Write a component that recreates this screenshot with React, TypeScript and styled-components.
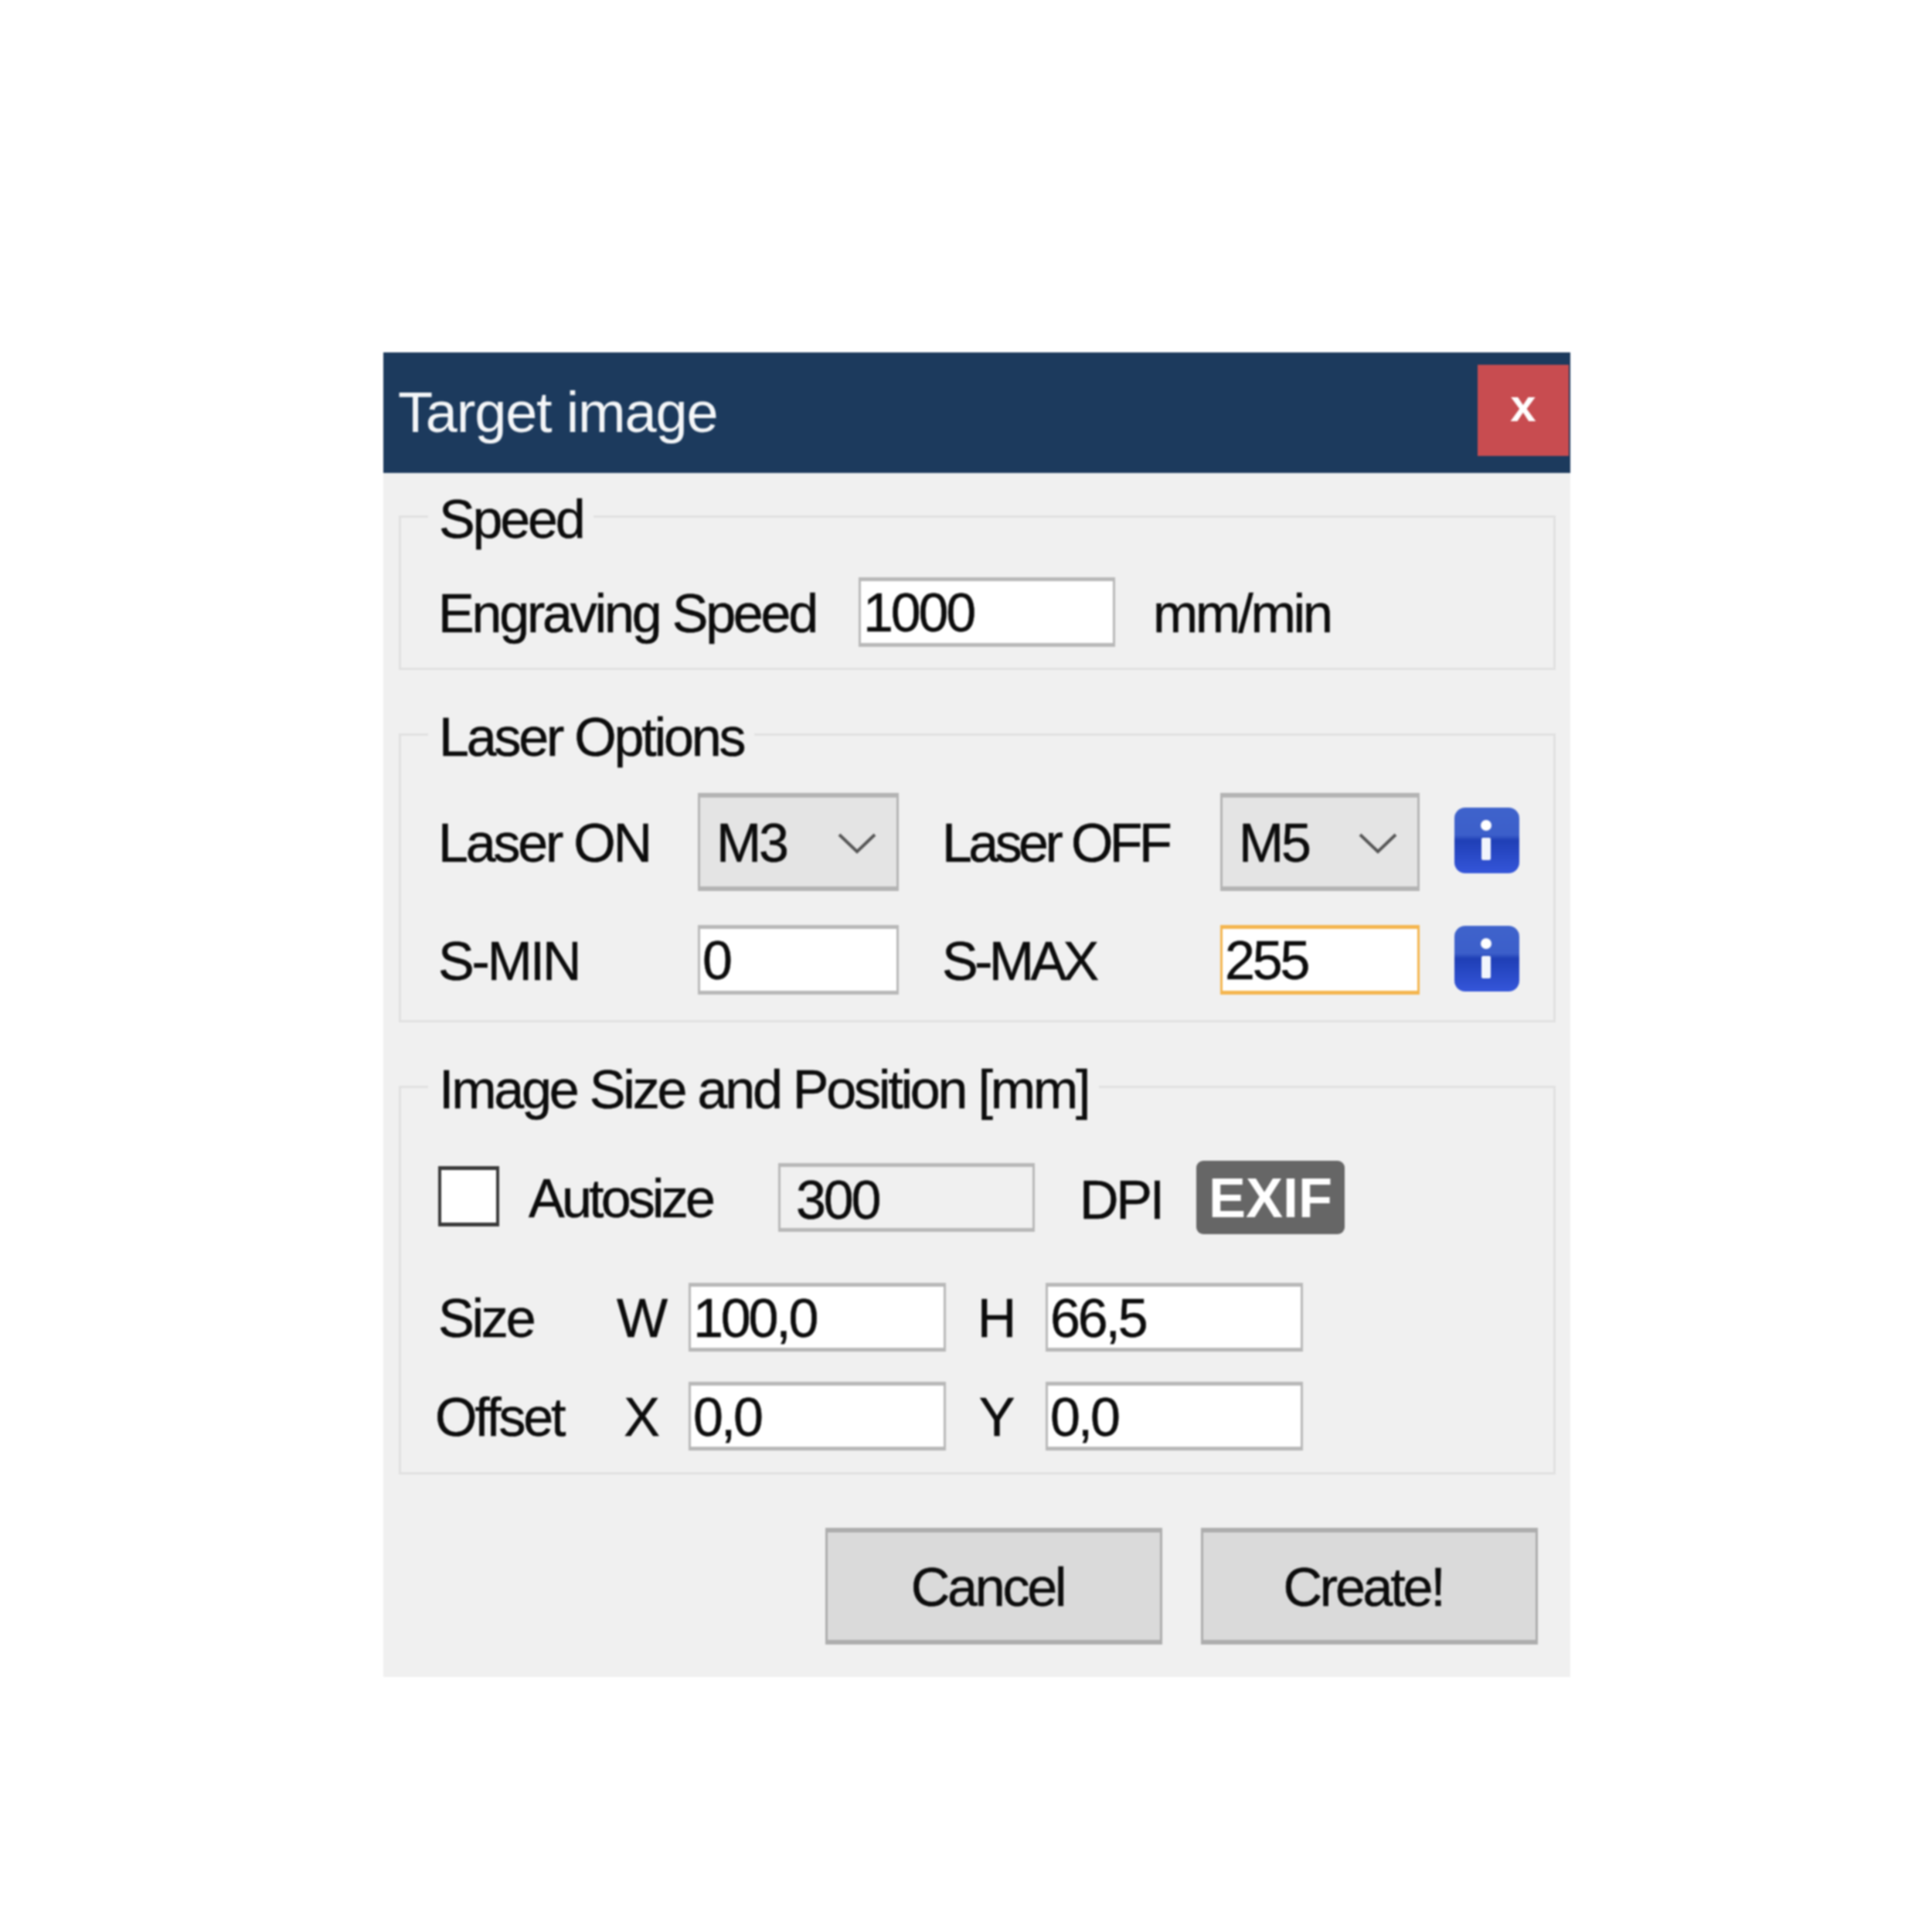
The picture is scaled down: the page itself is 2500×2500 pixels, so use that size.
import React from "react";
import styled, { createGlobalStyle } from "styled-components";

const Global = createGlobalStyle`
  * { box-sizing: border-box; }
  html, body { margin: 0; background: #fff; }
  body { font-family: "Liberation Sans", Arial, sans-serif; }
`;

const Page = styled.div`
  padding: 456px 0 0 496px;
  min-height: 2500px;
  background: #fff;
`;

const Dialog = styled.div`
  width: 1536px;
  background: #f0f0f0;
  color: #0c0c0c;
  font-size: 70px;
  line-height: 70px;
  letter-spacing: -3.2px;
  -webkit-text-stroke: 0.5px #0c0c0c;
  filter: blur(1.3px);
`;

const TitleBar = styled.header`
  height: 156px;
  background: #1c3a5d;
  display: flex;
  align-items: center;
  justify-content: space-between;
  padding: 0 2px 0 19px;
  -webkit-text-stroke: 0;
`;

const Title = styled.h1`
  margin: 0;
  font-size: 74px;
  font-weight: 400;
  letter-spacing: -1.2px;
  line-height: 74px;
  color: #f4f6f8;
`;

const Close = styled.button`
  width: 118px;
  height: 118px;
  margin-bottom: 6px;
  padding: 0 0 12px;
  border: 0;
  background: #c84c50;
  color: #fff;
  font: 700 60px/60px "Liberation Sans", Arial, sans-serif;
  display: flex;
  align-items: center;
  justify-content: center;
`;

const Body = styled.div`
  padding: 55px 19px 42px 20px;
  display: flex;
  flex-direction: column;
  gap: 82px;
`;

const Group = styled.section<{ $pt: number; $pb: number }>`
  position: relative;
  border: 3px solid #e1e1e1;
  padding: ${(p) => p.$pt}px 0 ${(p) => p.$pb}px 48px;
`;

const Legend = styled.h2`
  position: absolute;
  top: -33px;
  left: 35px;
  margin: 0;
  padding: 0 14px;
  background: #f0f0f0;
  font: inherit;
  letter-spacing: inherit;
`;

const Row = styled.div`
  display: flex;
  align-items: center;
`;

const Label = styled.span<{ $w?: number; $ml?: number; $ls?: number }>`
  display: block;
  white-space: nowrap;
  padding-top: 3px;
  width: ${(p) => (p.$w ? `${p.$w}px` : "auto")};
  margin-left: ${(p) => p.$ml ?? 0}px;
  ${(p) => (p.$ls ? `letter-spacing: ${p.$ls}px;` : "")}
`;

const Field = styled.input<{ $w: number; $h?: number; $focus?: boolean; $off?: boolean; $pl?: number }>`
  width: ${(p) => p.$w}px;
  height: ${(p) => p.$h ?? 90}px;
  flex: none;
  border-style: solid;
  border-width: 5px 3px;
  border-color: ${(p) => (p.$focus ? "#f4b54e" : "#b8b8b8")};
  border-radius: 0;
  outline: 0;
  padding: ${(p) => (p.$off ? 6 : 2)}px 0 0 ${(p) => p.$pl ?? 3}px;
  background: ${(p) => (p.$off ? "#f0f0f0" : "#fff")};
  color: #0c0c0c;
  font: inherit;
  letter-spacing: inherit;
`;

const LaserGrid = styled.div`
  display: grid;
  grid-template-columns: 336px 260px 416px 258px 129px;
  grid-template-rows: 127px 90px;
  row-gap: 44px;
  align-items: center;
`;

const EndLabel = styled(Label)`
  justify-self: end;
  width: 360px;
  letter-spacing: -4.6px;
`;

const Select = styled.div<{ $w: number }>`
  width: ${(p) => p.$w}px;
  height: 127px;
  border-style: solid;
  border-width: 6px 3px;
  border-color: #b4b4b4;
  background: #e4e4e4;
  padding: 3px 26px 0 21px;
  display: flex;
  align-items: center;
  justify-content: space-between;
`;

const InfoSlot = styled.button`
  justify-self: end;
  margin: -4px 0 0;
  padding: 0;
  border: 0;
  background: none;
  width: 84px;
  height: 85px;
  display: block;
`;

const Checkbox = styled.span`
  display: block;
  flex: none;
  width: 79px;
  height: 78px;
  margin-top: -3px;
  background: #fff;
  border-style: solid;
  border-width: 5px 4px;
  border-color: #3a3a3a;
`;

const ExifBadge = styled.span`
  flex: none;
  width: 192px;
  height: 95px;
  border-radius: 9px;
  background: #666;
  color: #fff;
  font-size: 72px;
  font-weight: 700;
  letter-spacing: 0;
  -webkit-text-stroke: 0;
  display: flex;
  align-items: center;
  justify-content: center;
`;

const ShiftLabel = styled(Label)`
  margin-top: 4px;
`;

const AutoRow = styled(Row)`
  height: 95px;
  margin-bottom: 63px;
`;

const SizeGrid = styled.div`
  display: grid;
  grid-template-columns: 231px 62px 31px 333px 129px 333px;
  grid-template-rows: 89px 89px;
  row-gap: 39px;
  align-items: center;
`;

const Axis = styled.span`
  text-align: center;
  padding-top: 3px;
`;

const AxisGap = styled.span``;

const OffsetLabel = styled(Label)`
  margin-left: -4px;
`;

const Actions = styled.div`
  display: flex;
  justify-content: flex-end;
  gap: 50px;
  margin-top: -13px;
  padding-right: 23px;
`;

const ActionButton = styled.button`
  width: 436px;
  height: 151px;
  border-style: solid;
  border-width: 6px 3px;
  border-color: #adadad;
  border-radius: 0;
  background: #dadada;
  color: #0c0c0c;
  padding: 2px 16px 0 0;
  font: inherit;
  letter-spacing: inherit;
`;

const Info = () => (
  <InfoSlot aria-label="Info">
    <svg width="84" height="85" viewBox="0 0 84 85">
      <defs>
        <linearGradient id="infoFill" x1="0" y1="0" x2="0" y2="1">
          <stop offset="0" stopColor="#3f63cc" />
          <stop offset="0.42" stopColor="#3c5fca" />
          <stop offset="0.5" stopColor="#1f3fb6" />
          <stop offset="1" stopColor="#3556da" />
        </linearGradient>
      </defs>
      <rect width="84" height="85" rx="14" fill="url(#infoFill)" />
      <circle cx="41" cy="23" r="7" fill="#fff" />
      <rect x="35" y="39" width="12" height="29" rx="2" fill="#f2f5fc" />
    </svg>
  </InfoSlot>
);

const Chevron = () => (
  <svg width="50" height="27" viewBox="0 0 50 27">
    <path d="M2 2 L25 24 L48 2" fill="none" stroke="#555" strokeWidth="4" />
  </svg>
);

export default function App() {
  return (
    <Page>
      <Global />
      <Dialog>
        <TitleBar>
          <Title>Target image</Title>
          <Close aria-label="Close">x</Close>
        </TitleBar>
        <Body>
          <Group $pt={77} $pb={27}>
            <Legend>Speed</Legend>
            <Row>
              <Label $w={544}>Engraving Speed</Label>
              <Field $w={332} defaultValue="1000" readOnly />
              <Label $ml={49}>mm/min</Label>
            </Row>
          </Group>

          <Group $pt={74} $pb={33}>
            <Legend>Laser Options</Legend>
            <LaserGrid>
              <Label>Laser ON</Label>
              <Select $w={260}>
                M3
                <Chevron />
              </Select>
              <EndLabel>Laser OFF</EndLabel>
              <Select $w={258}>
                M5
                <Chevron />
              </Select>
              <Info />
              <Label>S-MIN</Label>
              <Field $w={260} defaultValue="0" readOnly />
              <EndLabel>S-MAX</EndLabel>
              <Field $w={258} $focus defaultValue="255" readOnly />
              <Info />
            </LaserGrid>
          </Group>

          <Group $pt={94} $pb={28}>
            <Legend>Image Size and Position [mm]</Legend>
            <AutoRow>
              <Checkbox />
              <Label $w={323} $ml={38} $ls={-3.8}>Autosize</Label>
              <Field $w={332} $h={89} $off $pl={20} defaultValue="300" readOnly />
              <ShiftLabel $w={151} $ml={58}>DPI</ShiftLabel>
              <ExifBadge>EXIF</ExifBadge>
            </AutoRow>
            <SizeGrid>
              <Label>Size</Label>
              <Axis>W</Axis>
              <AxisGap />
              <Field $w={333} $h={89} defaultValue="100,0" readOnly />
              <Axis>H</Axis>
              <Field $w={333} $h={89} defaultValue="66,5" readOnly />
              <OffsetLabel>Offset</OffsetLabel>
              <Axis>X</Axis>
              <AxisGap />
              <Field $w={333} $h={89} defaultValue="0,0" readOnly />
              <Axis>Y</Axis>
              <Field $w={333} $h={89} defaultValue="0,0" readOnly />
            </SizeGrid>
          </Group>

          <Actions>
            <ActionButton>Cancel</ActionButton>
            <ActionButton>Create!</ActionButton>
          </Actions>
        </Body>
      </Dialog>
    </Page>
  );
}
